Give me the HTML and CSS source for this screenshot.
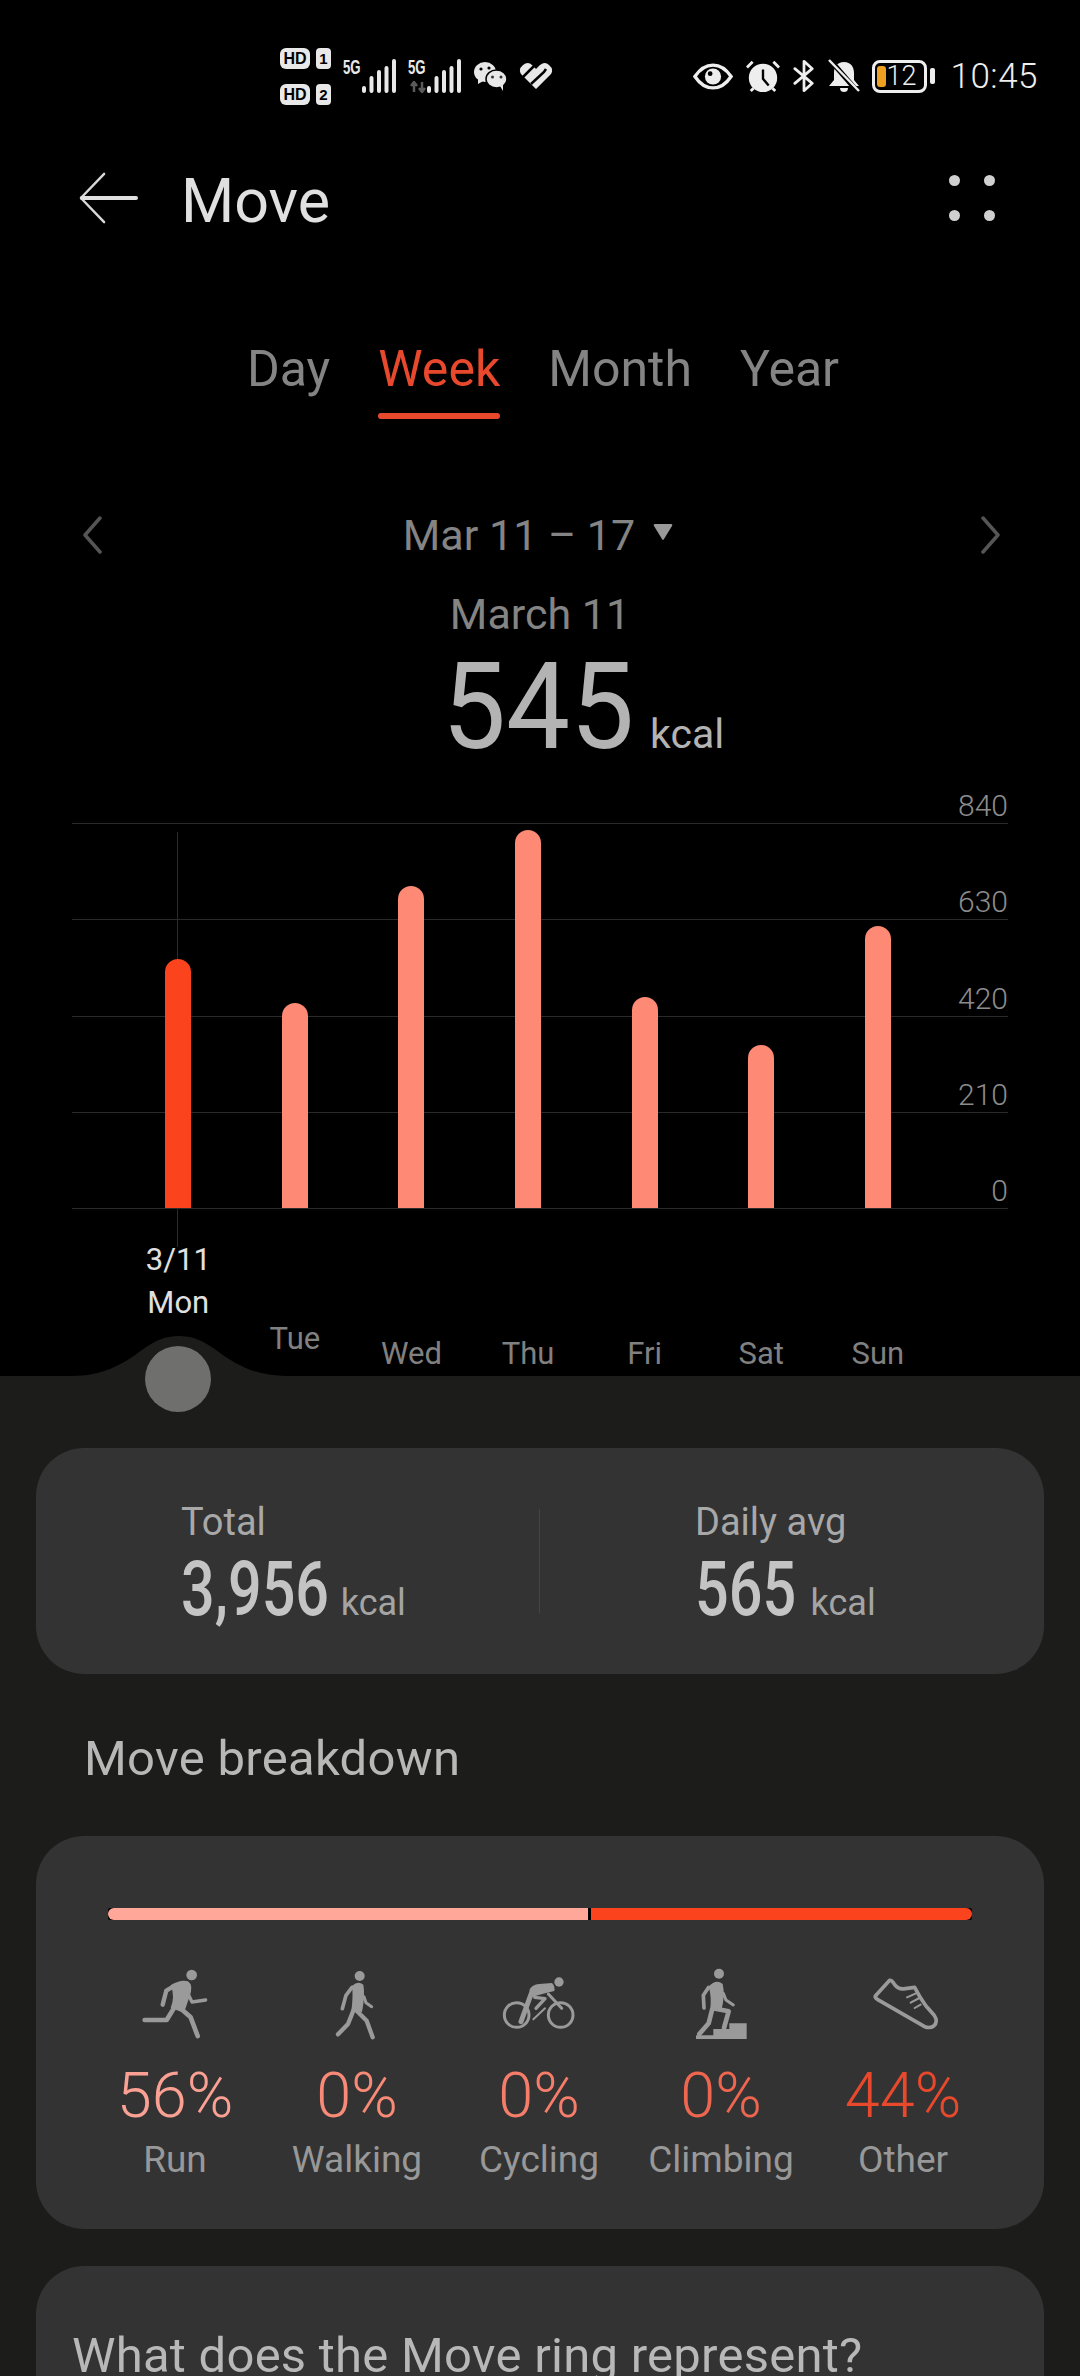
FILE: index.html
```html
<!DOCTYPE html>
<html lang="en">
<head>
<meta charset="utf-8">
<title>Move</title>
<link rel="stylesheet" href="styles.css">
</head>
<body>
<div class="screen">
  <div class="top">
    <div class="status">
      <div class="status-left">
        <div class="hd">
          <div class="hd-row"><span class="hd-tag">HD</span><span class="hd-num">1</span></div>
          <div class="hd-row"><span class="hd-tag">HD</span><span class="hd-num">2</span></div>
        </div>
        <div class="sig"><span class="sig-label">5G</span>
          <svg class="sig-bars" viewBox="0 0 36 34"><path d="M2 29v3M9.5 19v13M17 13v19M24.5 9v23M32 2v30"/></svg>
        </div>
        <div class="sig sig-two"><span class="sig-label">5G</span>
          <svg class="sig-arrows" viewBox="0 0 16 12"><path d="M4 11V2M1 5l3-4 3 4M12 1v9M9 7l3 4 3-4" fill="none" stroke="#5a5a5a" stroke-width="2.5"/></svg>
          <svg class="sig-bars" viewBox="0 0 36 34"><path d="M2 29v3M9.5 19v13M17 13v19M24.5 9v23M32 2v30"/></svg>
        </div>
        <svg class="wechat" viewBox="0 0 34 30"><ellipse cx="11" cy="11" rx="11" ry="10" fill="#e8e8e8"/><path d="M4 16l0 7 7-4z" fill="#e8e8e8"/><circle cx="7" cy="8" r="1.6" fill="#000"/><circle cx="15" cy="7" r="1.6" fill="#000"/><ellipse cx="22.5" cy="18" rx="10.5" ry="9" fill="#e8e8e8" stroke="#000" stroke-width="1.5"/><path d="M26 25l3 5 0-7z" fill="#e8e8e8"/><circle cx="18.5" cy="16" r="1.5" fill="#333"/><circle cx="27" cy="16" r="1.5" fill="#333"/></svg>
        <svg class="heart" viewBox="0 0 34 28"><path d="M17 27L2 12Q-1 7 4 3 9-1 13 3L17 7 21 3Q26-1 30 3 35 7 32 12z" fill="#e8e8e8"/><path d="M4 15L17 2M12 22L25 10 27 7" fill="none" stroke="#000" stroke-width="2.5"/></svg>
      </div>
      <div class="status-right">
        <svg class="st-eye" viewBox="0 0 42 30"><path d="M2 15C8 6 14 3 21 3s13 3 19 12c-6 9-12 12-19 12S8 24 2 15z" fill="none" stroke="#eee" stroke-width="3.5"/><circle cx="21" cy="15" r="8.5" fill="#eee"/><circle cx="18" cy="12" r="2.5" fill="#000"/></svg>
        <svg class="st-alarm" viewBox="0 0 36 34"><circle cx="18" cy="19" r="15" fill="#eee"/><path d="M18 10v10l6 7" fill="none" stroke="#000" stroke-width="2.5"/><path d="M1 8l6-6M35 8l-6-6M5 33l3-3M31 33l-3-3" stroke="#eee" stroke-width="3" fill="none"/></svg>
        <svg class="st-bt" viewBox="0 0 24 34"><path d="M2 9l19 16-9 8V1l9 8L2 25" fill="none" stroke="#eee" stroke-width="3" stroke-linejoin="round" stroke-linecap="round"/></svg>
        <svg class="st-bell" viewBox="0 0 32 34"><path d="M16 3c7 0 10 5 10 11v7l5 6H1l5-6v-7C6 8 9 3 16 3z" fill="#eee"/><path d="M12 29h8c0 3-2 4-4 4s-4-1-4-4z" fill="#eee"/><path d="M3 2l26 30" stroke="#000" stroke-width="5"/><path d="M1 1l30 31" stroke="#eee" stroke-width="2.5"/></svg>
        <div class="batt"><span class="batt-fill"></span><span class="batt-num">12</span></div>
        <span class="batt-cap"></span>
        <span class="clock">10:45</span>
      </div>
    </div>

    <header class="head">
      <div class="head-left">
        <svg class="back" viewBox="0 0 62 56"><path d="M27 3L3 28l24 25" fill="none" stroke="#d8d8d8" stroke-width="2.5" stroke-linecap="round" stroke-linejoin="round"/><path d="M4 28h56" fill="none" stroke="#e0e0e0" stroke-width="4" stroke-linecap="round"/></svg>
        <h1 class="title">Move</h1>
      </div>
      <div class="dots"><i></i><i></i><i></i><i></i></div>
    </header>

    <nav class="tabs">
      <span class="tab">Day</span>
      <span class="tab tab-on">Week</span>
      <span class="tab">Month</span>
      <span class="tab">Year</span>
    </nav>

    <div class="range">
      <svg class="chev" viewBox="0 0 20 40"><path d="M18 3L3 20l15 17" fill="none" stroke="#555" stroke-width="3.5" stroke-linecap="round" stroke-linejoin="round"/></svg>
      <div class="range-mid"><span>Mar 11 – 17</span><svg class="tri" viewBox="0 0 22 18"><path d="M3 1h16q2 0 1 2l-8 13q-1 2-2 0L2 3q-1-2 1-2z" fill="#999"/></svg></div>
      <svg class="chev" viewBox="0 0 20 40"><path d="M2 3l15 17L2 37" fill="none" stroke="#555" stroke-width="3.5" stroke-linecap="round" stroke-linejoin="round"/></svg>
    </div>

    <div class="day-sum">
      <div class="day-date">March 11</div>
      <div class="day-val"><span class="big">545</span><span class="unit">kcal</span></div>
    </div>

    <div class="chart">
      <div class="grid">
        <div class="gl"><span>840</span></div>
        <div class="gl"><span>630</span></div>
        <div class="gl"><span>420</span></div>
        <div class="gl"><span>210</span></div>
        <div class="gl"><span>0</span></div>
      </div>
      <div class="cursor"></div>
      <div class="bars">
        <div class="col"><div class="bar bar-on" style="height:249px"></div></div>
        <div class="col"><div class="bar" style="height:205px"></div></div>
        <div class="col"><div class="bar" style="height:322px"></div></div>
        <div class="col"><div class="bar" style="height:378px"></div></div>
        <div class="col"><div class="bar" style="height:211px"></div></div>
        <div class="col"><div class="bar" style="height:163px"></div></div>
        <div class="col"><div class="bar" style="height:282px"></div></div>
      </div>
    </div>

    <div class="days">
      <div class="day day-on"><span>3/11</span><span>Mon</span></div>
      <div class="day day-tue"><span>Tue</span></div>
      <div class="day"><span>Wed</span></div>
      <div class="day"><span>Thu</span></div>
      <div class="day"><span>Fri</span></div>
      <div class="day"><span>Sat</span></div>
      <div class="day"><span>Sun</span></div>
    </div>
  </div>

  <main class="sheet">
    <svg class="bump" viewBox="0 0 214 42"><path d="M0 41C30 41 50 30 70 15 85 4 95 1 107 1s22 3 37 14c20 15 40 26 70 26v1H0z" fill="#1c1d1b"/></svg>
    <div class="knob"></div>

    <section class="card totals">
      <div class="tot tot-a"><div class="tot-l">Total</div><div class="tot-v"><b class="num-long">3,956</b><span>kcal</span></div></div>
      <div class="tot-sep"></div>
      <div class="tot tot-b"><div class="tot-l">Daily avg</div><div class="tot-v"><b class="num-short">565</b><span>kcal</span></div></div>
    </section>

    <h2 class="sec">Move breakdown</h2>

    <section class="card brk">
      <div class="split"><span class="split-a"></span><span class="split-b"></span></div>
      <div class="acts">
        <div class="act">
          <svg class="ico" viewBox="105 258 240 228"><circle cx="275" cy="285" r="16" class="f"/><path class="f" d="M212 316Q240 298 264 304 282 316 268 352L252 398 212 384Q226 350 212 316z"/><path class="s" d="M222 318L199 332 188 374" stroke-width="13"/><path class="s" d="M266 345L276 366 317 360" stroke-width="10"/><path class="s" d="M236 380L272 412 293 468" stroke-width="14"/><path class="s" d="M222 384L200 420H134" stroke-width="14"/></svg>
          <div class="pct p1">56%</div><div class="lab">Run</div>
        </div>
        <div class="act">
          <svg class="ico" viewBox="657 258 240 228"><circle cx="785" cy="288" r="15" class="f"/><path class="f" d="M762 318Q780 300 796 314 802 345 792 396L760 392Q766 350 762 318z"/><path class="s" d="M762 322L744 346 733 386" stroke-width="11"/><path class="s" d="M798 350L804 368 821 380" stroke-width="9"/><path class="s" d="M776 392L806 422 824 472" stroke-width="13"/><path class="s" d="M766 392L750 432 720 463" stroke-width="13"/></svg>
          <div class="pct p2">0%</div><div class="lab">Walking</div>
        </div>
        <div class="act">
          <svg class="ico" viewBox="1197 258 240 228"><circle cx="1250" cy="405" r="37" class="w"/><circle cx="1382" cy="405" r="37" class="w"/><circle cx="1377" cy="306" r="14" class="f"/><path class="f" d="M1288 330Q1296 313 1318 312L1356 309Q1366 320 1363 333L1335 340 1298 350z"/><path class="s" d="M1345 342L1385 385" stroke-width="9"/><path class="s" d="M1296 335L1263 425" stroke-width="15"/><path class="s" d="M1304 352L1335 356 1308 385" stroke-width="10"/><path class="w" d="M1300 418L1335 385" style="stroke-width:6"/></svg>
          <div class="pct p3">0%</div><div class="lab">Cycling</div>
        </div>
        <div class="act">
          <svg class="ico" viewBox="423 258 240 228"><circle cx="537" cy="281" r="15" class="f"/><path class="f" d="M506 320Q528 296 548 312 556 345 544 392L510 392Q516 350 506 320z"/><path class="s" d="M506 322L490 346 492 384" stroke-width="11"/><path class="s" d="M550 340L558 360 580 375" stroke-width="9"/><path class="s" d="M526 386L566 394 552 444" stroke-width="14"/><path class="s" d="M516 390L506 430 478 462" stroke-width="14"/><path class="f" d="M468 477V466H520V447H568V430H620V477z"/></svg>
          <div class="pct p4">0%</div><div class="lab">Climbing</div>
        </div>
        <div class="act">
          <svg class="ico" viewBox="963 258 240 228"><path d="M1000 348L1043 301Q1050 300 1058 314 1070 330 1090 326L1118 322Q1132 350 1152 378L1176 405Q1190 425 1175 438 1165 446 1148 440L1006 358Q998 352 1000 348z" class="w" style="stroke-width:11"/><path class="w" d="M1095 352L1122 340M1106 368L1132 354M1118 384L1136 374" style="stroke-width:6"/></svg>
          <div class="pct p5">44%</div><div class="lab">Other</div>
        </div>
      </div>
    </section>

    <section class="card faq">
      <div class="faq-q">What does the Move ring represent?</div>
    </section>
  </main>
</div>
</body>
</html>
```
FILE: styles.css
```css
* { box-sizing: border-box; margin: 0; padding: 0; }
html, body { background: #000; }
body { width: 1080px; height: 2376px; overflow: hidden; font-family: Roboto, "Noto Sans", sans-serif; color: #ddd; }
.screen { width: 1080px; height: 2376px; display: flex; flex-direction: column; overflow: hidden; }

.top { height: 1376px; display: flex; flex-direction: column; flex: none; }

.status { height: 98px; display: flex; align-items: flex-start; justify-content: space-between; padding: 54px 42px 0 280px; flex: none; }
.status-left, .status-right { display: flex; align-items: center; height: 44px; }
.hd { display: flex; flex-direction: column; gap: 15px; }
.hd-row { display: flex; gap: 6px; align-items: center; }
.hd-tag { background: #e8e8e8; color: #000; font: 700 16px/21px "Liberation Sans", sans-serif; border-radius: 6px; width: 30px; text-align: center; height: 21px; }
.hd-num { background: #e8e8e8; color: #000; font: 700 15px/21px "Liberation Sans", sans-serif; border-radius: 4px; width: 15px; height: 21px; text-align: center; }
.sig { position: relative; display: flex; align-items: flex-start; margin-left: 12px; height: 34px; }
.sig-two { margin-left: 10px; }
.sig-label { font: 700 20px/16px "Liberation Sans", sans-serif; color: #e8e8e8; width: 19px; transform: scaleX(.66); transform-origin: 0 0; white-space: nowrap; }
.sig-arrows { position: absolute; left: 2px; top: 22px; width: 16px; height: 12px; }
.sig-bars { width: 36px; height: 34px; }
.sig-bars path { stroke: #e8e8e8; stroke-width: 4; stroke-linecap: round; fill: none; }
.wechat { width: 34px; height: 30px; margin-left: 11px; }
.heart { width: 34px; height: 28px; margin-left: 11px; }
.st-eye { width: 40px; height: 29px; }
.st-alarm { width: 34px; height: 34px; margin-left: 13px; }
.st-bt { width: 22px; height: 34px; margin-left: 13px; }
.st-bell { width: 32px; height: 34px; margin-left: 13px; }
.batt { width: 55px; height: 33px; border: 3px solid #eee; border-radius: 8px; margin-left: 12px; display: flex; align-items: center; padding-left: 2px; flex: none; }
.batt-fill { width: 9px; height: 21px; background: #f0a020; border-radius: 3px; flex: none; }
.batt-num { font-size: 27px; font-weight: 300; color: #eee; line-height: 26px; }
.batt-cap { width: 5px; height: 16px; background: #eee; border-radius: 2px; margin-left: 3px; }
.clock { font-size: 35px; font-weight: 300; color: #eee; margin-left: 15px; letter-spacing: .5px; }

.head { display: flex; align-items: center; justify-content: space-between; height: 110px; padding: 0 85px 0 78px; margin-top: 45px; flex: none; }
.head-left { display: flex; align-items: center; gap: 43px; }
.back { width: 60px; height: 56px; flex: none; }
.title { font-size: 61px; font-weight: 400; color: #e0e0e0; line-height: 70px; margin-top: 5px; }
.dots { width: 46px; height: 46px; display: grid; grid-template-columns: 1fr 1fr; align-content: space-between; justify-items: start; margin-top: -1px; }
.dots i { display: block; width: 11px; height: 11px; border-radius: 50%; background: #d0d0d0; }
.dots i:nth-child(even) { justify-self: end; }

.tabs { display: flex; justify-content: center; gap: 48px; margin-top: 84px; height: 82px; padding-left: 6px; flex: none; }
.tab { font-size: 50px; font-weight: 400; color: #848484; line-height: 64px; height: 82px; display: flex; flex-direction: column; justify-content: space-between; }
.tab-on { color: #e8492c; }
.tab-on::after { content: ""; display: block; height: 6px; border-radius: 3px; background: #e8492c; }

.range { display: flex; align-items: center; justify-content: space-between; margin-top: 94px; height: 44px; padding: 0 79px 0 82px; flex: none; }
.chev { width: 20px; height: 40px; flex: none; }
.range-mid { display: flex; align-items: center; gap: 17px; font-size: 43px; font-weight: 400; color: #848484; line-height: 44px; margin-left: -6px; }
.tri { width: 22px; height: 18px; margin-top: -6px; }

.day-sum { display: flex; flex-direction: column; align-items: center; margin-top: 31px; flex: none; }
.day-date { font-size: 43px; font-weight: 400; color: #848484; line-height: 52px; }
.day-val { display: flex; align-items: baseline; gap: 16px; margin: 11px 0 0 86px; height: 112px; }
.big { display: inline-block; font-size: 120px; font-weight: 400; color: #b3b3b3; line-height: 112px; transform: scaleX(.95); transform-origin: 0 50%; margin-right: -10px; }
.unit { font-size: 41px; color: #b3b3b3; font-weight: 400; }

.chart { position: relative; height: 386px; margin: 60px 0 0 72px; width: 936px; flex: none; }
.grid { height: 386px; display: flex; flex-direction: column; justify-content: space-between; }
.gl { height: 1px; background: #2a2a2a; position: relative; }
.gl span { position: absolute; right: 0; bottom: 1px; font-size: 30px; font-weight: 300; color: #8c8c8c; line-height: 34px; }
.bars { position: absolute; left: 48px; bottom: 1px; display: flex; }
.col { width: 116.6px; display: flex; justify-content: center; align-items: flex-end; height: 385px; }
.bar { width: 26px; background: #fe8a76; border-radius: 13px 13px 0 0; }
.bar-on { background: #fb431e; }
.cursor { position: absolute; left: 105px; top: 9px; width: 1px; height: 415px; background: #4b2018; }

.days { display: flex; padding-left: 120px; height: 168px; flex: none; }
.day { width: 116.6px; display: flex; flex-direction: column; align-items: center; justify-content: flex-end; font-size: 31px; font-weight: 400; color: #808080; line-height: 42px; padding-bottom: 2px; }
.day-on { color: #e0e0e0; justify-content: flex-start; padding-top: 29px; line-height: 43px; }
.day-tue { padding-bottom: 17px; }

.sheet { position: relative; flex: 1; background: #1c1d1b; padding: 72px 36px 0; }
.bump { position: absolute; left: 72px; top: -41px; width: 214px; height: 42px; }
.knob { position: absolute; left: 145px; top: -30px; width: 66px; height: 66px; border-radius: 50%; background: #6f706e; }

.card { background: #333; border-radius: 48px; }
.totals { height: 226px; display: flex; }
.tot { padding-top: 52px; }
.tot-a { width: 503px; padding-left: 145px; }
.tot-b { flex: 1; padding-left: 155px; }
.tot-sep { width: 1px; height: 104px; background: #444; flex: none; align-self: center; }
.tot-l { font-size: 38px; font-weight: 400; color: #a8a8a8; line-height: 44px; }
.tot-v { display: flex; align-items: baseline; line-height: 72px; margin-top: 9px; }
.tot-v b { display: inline-block; font-size: 76px; font-weight: 500; color: #c4c4c4; transform: scaleX(.78); transform-origin: 0 100%; }
.num-long { margin-right: -30px; }
.num-short { margin-right: -14px; }
.tot-v span { font-size: 36px; font-weight: 400; color: #a4a4a4; }

.sec { font-size: 49px; font-weight: 400; color: #b8b8b8; line-height: 56px; padding-left: 48px; margin: 57px 0 49px; letter-spacing: .3px; }

.brk { height: 393px; padding: 72px 48px 0; }
.split { display: flex; height: 12px; margin: 0 24px; background: #000; border-radius: 2px; gap: 3px; }
.split-a { width: 480px; background: #ffa798; border-radius: 6px 0 0 6px; }
.split-b { flex: 1; background: #fb431e; border-radius: 0 6px 6px 0; }
.acts { display: flex; margin-top: 46px; }
.act { width: 182px; display: flex; flex-direction: column; align-items: center; }
.ico { width: 80px; height: 76px; }
.f { fill: #9a9a9a; }
.s { fill: none; stroke: #9a9a9a; stroke-linecap: round; stroke-linejoin: round; }
.w { fill: none; stroke: #9a9a9a; stroke-width: 9; stroke-linecap: round; stroke-linejoin: round; }
.pct { font-size: 63px; font-weight: 300; line-height: 70px; margin-top: 19px; }
.p1 { color: #fba193; }
.p2 { color: #f98a78; }
.p3 { color: #f67d6a; }
.p4 { color: #ee6650; }
.p5 { color: #e8492c; }
.lab { font-size: 37px; font-weight: 400; color: #989898; line-height: 46px; margin-top: 6px; }

.faq { margin-top: 37px; height: 200px; padding: 60px 36px 0; }
.faq-q { font-size: 49px; font-weight: 400; color: #b8b8b8; line-height: 60px; white-space: nowrap; letter-spacing: .25px; }
```
